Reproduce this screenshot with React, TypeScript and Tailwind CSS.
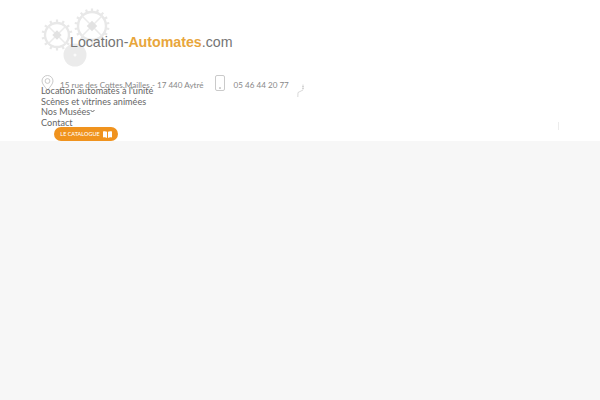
function Gear({ cx, cy, r, teeth }: { cx: number; cy: number; r: number; teeth: number }) {
  const marks = Array.from({ length: teeth }, (_, i) => (i * 360) / teeth);
  return (
    <g>
      {marks.map((a) => (
        <rect key={a} x={cx - 1.1} y={cy - r - 0.5} width={2.2} height={3} fill="#e8e8e8" transform={`rotate(${a} ${cx} ${cy})`} />
      ))}
      <circle cx={cx} cy={cy} r={r - 3} fill="none" stroke="#e8e8e8" strokeWidth={2.4} />
      <line x1={cx - r * 0.6} y1={cy - r * 0.6} x2={cx + r * 0.6} y2={cy + r * 0.6} stroke="#ebebeb" strokeWidth={1.6} />
      <line x1={cx + r * 0.6} y1={cy - r * 0.6} x2={cx - r * 0.6} y2={cy + r * 0.6} stroke="#ebebeb" strokeWidth={1.6} />
      <rect x={cx - r * 0.22} y={cy - r * 0.22} width={r * 0.44} height={r * 0.44} fill="#e2e2e2" transform={`rotate(45 ${cx} ${cy})`} />
    </g>
  );
}

function Logo() {
  return (
    <div className="relative h-[75px] w-[195px]">
      <svg width="80" height="75" viewBox="0 0 80 75" className="absolute left-0 top-0">
        <Gear cx={16} cy={35} r={15} teeth={14} />
        <Gear cx={51} cy={26} r={17} teeth={18} />
        <circle cx={34} cy={55} r={11.5} fill="#ebebeb" />
        <circle cx={34} cy={55} r={1.5} fill="#fafafa" />
      </svg>
      <p className="absolute left-[29px] top-[32px] whitespace-nowrap font-['Liberation_Sans',sans-serif] text-[14.2px] leading-5 text-[#757575]">
        Location-<span className="font-bold text-[#e8a63c]">Automates</span>.com
      </p>
    </div>
  );
}

function PinIcon() {
  return (
    <svg width="13" height="16" viewBox="0 0 13 16" fill="none" stroke="#bdbdbd" strokeWidth="0.8">
      <path d="M6.5 15.2C3.5 11.2 1 8.8 1 6a5.5 5.5 0 0 1 11 0c0 2.8-2.5 5.2-5.5 9.2Z" />
      <circle cx="6.5" cy="6" r="2.4" />
    </svg>
  );
}

function PhoneIcon() {
  return (
    <svg width="10" height="16" viewBox="0 0 10 16" fill="none" stroke="#bdbdbd" strokeWidth="0.8">
      <rect x="0.5" y="0.5" width="9" height="15" rx="1.5" />
      <circle cx="5" cy="13" r="0.6" fill="#bdbdbd" />
    </svg>
  );
}

function TowerIcon() {
  return (
    <svg width="10" height="14" viewBox="0 0 10 14" fill="none" stroke="#cfcfcf" strokeWidth="0.8">
      <path d="M6 0.5v5M5 2.5h2M5 4.5h2M6 6 1 8.5 0.8 13" />
    </svg>
  );
}

function BookIcon() {
  return (
    <svg width="9" height="7" viewBox="0 0 9 7" fill="white">
      <path d="M0 0.5c1.5-.5 3-.4 4 .3V7C3 6.3 1.5 6.200 0 6.500Z" />
      <path d="M9 0.500c-1.500-.5-3-.4-4 .3V7c1-.7 2.500-.8 4-.5Z" />
    </svg>
  );
}

export default function App() {
  return (
    <div className="min-h-[400px] bg-[#f7f7f7] font-['Lato','Noto_Sans',sans-serif]">
      <header className="relative h-[141px] bg-white pl-[41px]">
        <Logo />
        <div className="flex items-start text-[8.1px] leading-3 text-[#888]">
          <PinIcon />
          <span className="ml-[6px] mt-[4px] whitespace-nowrap">15 rue des Cottes Mailles - 17 440 Aytré</span>
          <span className="ml-[11px]"><PhoneIcon /></span>
          <span className="ml-[9px] mt-[4px] whitespace-nowrap">05 46 44 20 77</span>
          <span className="ml-[8px] mt-[9px]"><TowerIcon /></span>
        </div>
        <nav className="-mt-[12px] flex flex-col text-[9.15px] leading-[10.5px] text-[#666]">
          <a>Location automates à l'unité</a>
          <a>Scènes et vitrines animées</a>
          <a className="flex items-center">
            Nos Musées
            <svg width="5" height="4" viewBox="0 0 5 4" className="mb-[2px]">
              <path d="M0.5 1 2.5 3 4.5 1" fill="none" stroke="#666" strokeWidth="1" />
            </svg>
          </a>
          <a>Contact</a>
        </nav>
        <a className="ml-[13px] mt-[-1px] flex h-[14px] w-[64px] items-center justify-center gap-[3px] rounded-full bg-[#f0931e] text-[5.5px] font-medium uppercase text-white">
          Le catalogue
          <BookIcon />
        </a>
        <div className="absolute right-[41px] top-[122px] h-[8px] w-px bg-[#ececec]" />
      </header>
    </div>
  );
}
